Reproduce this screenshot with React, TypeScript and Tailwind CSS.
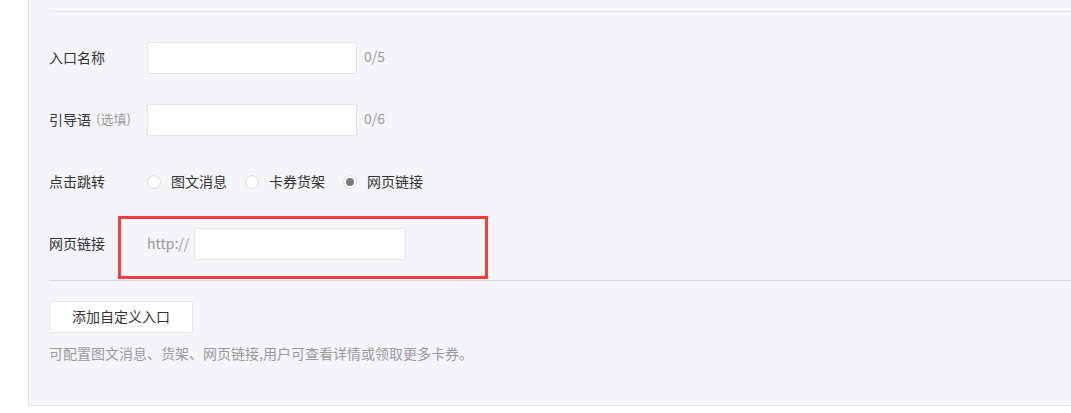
import React from "react";

function Radio({ checked, label }: { checked?: boolean; label: string }) {
  return (
    <label className="flex items-center">
      <span className="w-[14px] h-[14px] rounded-full border border-[#d6d8de] bg-white flex items-center justify-center">
        {checked && <span className="w-[8px] h-[8px] rounded-full bg-[#7a7a7a]" />}
      </span>
      <span className="ml-[10px] text-[14px] leading-[20px] pb-[2px] text-[#333]">{label}</span>
    </label>
  );
}

export default function App() {
  return (
    <div
      className="w-[1071px] h-[413px] bg-white overflow-hidden"
      style={{ fontFamily: '"Microsoft YaHei", "Noto Sans CJK SC", "Noto Sans", sans-serif' }}
    >
      <div className="ml-[28px] h-[406px] bg-[#f4f5f9] border-l border-b border-[#e3e4e9] pl-[20px] pt-[11px]">
        <div className="h-px bg-[#e3e4e9]" />
        <div className="mt-[30px] flex flex-col gap-[30px]">
          <div className="flex items-center h-[32px]">
            <div className="w-[98px] text-[14px] leading-[20px] pb-[3px] text-[#333]">入口名称</div>
            <div className="w-[210px] h-[32px] bg-white border border-[#e3e4e9]" />
            <div className="ml-[7px] text-[14px] leading-[20px] pb-[5px] text-[#999]">0/5</div>
          </div>
          <div className="flex items-center h-[32px]">
            <div className="w-[98px] text-[14px] leading-[20px] pb-[3px] text-[#333] flex items-center">
              引导语<span className="ml-[5px] text-[13px] text-[#999]">(选填)</span>
            </div>
            <div className="w-[210px] h-[32px] bg-white border border-[#e3e4e9]" />
            <div className="ml-[7px] text-[14px] leading-[20px] pb-[5px] text-[#999]">0/6</div>
          </div>
          <div className="flex items-center h-[32px]">
            <div className="w-[98px] text-[14px] leading-[20px] pb-[2px] text-[#333]">点击跳转</div>
            <div className="flex items-center gap-[18px]">
              <Radio label="图文消息" />
              <Radio label="卡券货架" />
              <Radio checked label="网页链接" />
            </div>
          </div>
          <div className="relative flex items-center h-[32px]">
            <div className="w-[98px] text-[14px] leading-[20px] pb-[3px] text-[#333]">网页链接</div>
            <div className="text-[14px] leading-[20px] pb-[3px] text-[#999]">http://</div>
            <div className="ml-[5px] w-[212px] h-[32px] bg-white border border-[#e3e4e9]" />
            <div className="absolute left-[69px] top-[-12px] w-[370px] h-[63px] border-[3px] border-[#f73d3d]" />
          </div>
        </div>
        <div className="mt-[20px] h-px bg-[#d9dadf]" />
        <button className="mt-[20px] w-[144px] h-[32px] bg-white border border-[#e3e4e9] rounded-[2px] text-[14px] text-[#333] flex items-center justify-center">
          <span className="pb-[2px]">添加自定义入口</span>
        </button>
        <div className="mt-[10px] text-[14px] leading-[20px] text-[#999]">
          可配置图文消息、货架、网页链接,用户可查看详情或领取更多卡券。
        </div>
      </div>
    </div>
  );
}
